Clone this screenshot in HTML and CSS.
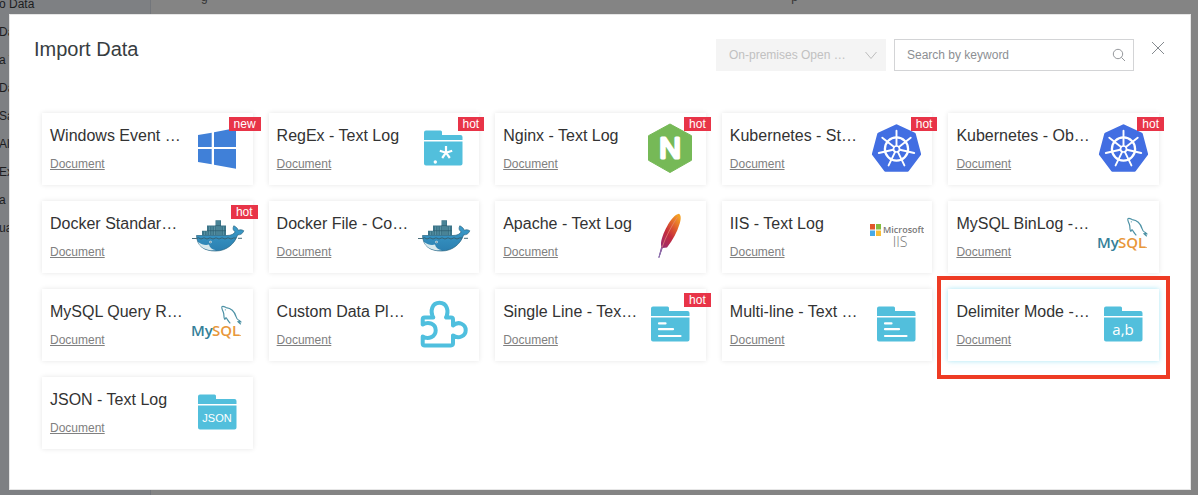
FILE: index.html
```html
<!DOCTYPE html>
<html lang="en">
<head>
<meta charset="utf-8">
<title>Import Data</title>
<link rel="stylesheet" href="styles.css">
</head>
<body>
<svg class="sprite" aria-hidden="true">
  <defs>
    <linearGradient id="feather-fill" x1="0.8" y1="0" x2="0.2" y2="1">
      <stop offset="0" stop-color="#f4a024"/><stop offset="0.25" stop-color="#e0602c"/>
      <stop offset="0.5" stop-color="#c42a3c"/><stop offset="0.75" stop-color="#a52c62"/><stop offset="1" stop-color="#6a3c98"/>
    </linearGradient>
    <linearGradient id="whale-fill" x1="0" y1="0" x2="0" y2="1">
      <stop offset="0" stop-color="#3c9ccb"/><stop offset="1" stop-color="#2b7fb0"/>
    </linearGradient>
  </defs>
  <symbol id="windows" viewBox="0 0 56 56">
    <path fill="#4080d8" d="M9 14 22.7 11.7V26H9zM25 11.2 47 7V26H25zM9 28H22.7V43.3L9 41zM25 28H47V47.7L25 43.8z"/>
  </symbol>
  <symbol id="folder" viewBox="0 0 56 56">
    <path fill="#52bfdc" d="M11 9.5H25.5Q27 9.5 27 11V14H45.5Q47.5 14 47.5 16V19H9V11.5Q9 9.5 11 9.5zM9 20.5H47.5V42.5Q47.5 44.5 45.5 44.5H11Q9 44.5 9 42.5z"/>
  </symbol>
  <symbol id="regex" viewBox="0 0 56 56">
    <use href="#folder"/>
    <path stroke="#fff" stroke-width="2.2" d="M31 25V31.7M31 31.7 24.8 29.7M31 31.7 37.2 29.7M31 31.7 27.2 37M31 31.7 34.8 37"/>
    <circle cx="20.3" cy="41" r="1.7" fill="#fff"/>
  </symbol>
  <symbol id="lines" viewBox="0 0 56 56">
    <use href="#folder"/>
    <path stroke="#fff" stroke-width="2.2" stroke-linecap="round" d="M17 26.4H23.5M17 32.2H31M17 39H38.5"/>
  </symbol>
  <symbol id="delimiter" viewBox="0 0 56 56">
    <use href="#folder"/><text class="folder-ab" x="28" y="38" text-anchor="middle">a,b</text>
  </symbol>
  <symbol id="json" viewBox="0 0 56 56">
    <use href="#folder"/><text class="folder-json" x="28" y="37" text-anchor="middle">JSON</text>
  </symbol>
  <symbol id="nginx" viewBox="0 0 56 56">
    <path fill="#76b957" stroke="#76b957" stroke-linejoin="round" d="M28 3 49.5 14.7V39.3L28 51.5 6.5 39.3V14.7z"/>
    <text class="nginx-mark" x="28" y="37" text-anchor="middle">N</text>
  </symbol>
  <symbol id="kubernetes" viewBox="0 0 56 56">
    <path fill="#426ee2" stroke="#426ee2" stroke-width="3" stroke-linejoin="round" d="M28.5 4.8 46.3 13.2 51.6 33.2 39.6 49.2H17.4L5.4 33.2 10.7 13.2z"/>
    <g fill="none" stroke="#fff">
      <circle cx="28.5" cy="28" r="11.6" stroke-width="2.3"/>
      <path stroke-width="1.9" stroke-linecap="round" d="M28.5 24.5V9.8M31.2 25.8 42.7 16.7M31.9 28.8 46.2 32M30 31.2 36.4 44.4M27 31.2 20.6 44.4M25.1 28.8 10.8 32M25.8 25.8 14.3 16.7"/>
      <circle cx="28.5" cy="28" r="3" stroke-width="1.7"/>
    </g>
  </symbol>
  <symbol id="docker" viewBox="0 0 56 56">
    <path fill="#3d7589" d="M26.5 11.3H32V16.5H37V26.5H13V21.7H18V16.5H26.5z"/>
    <path fill="none" stroke="#69a5b5" stroke-width="0.6" d="M15.5 22.5V26M18 22V26M20.5 17.5V26M23 17.5V26M25.5 17.5V26M28 12V26M30 12V26M32 17.5V26M34.5 17.5V26"/>
    <path stroke="#2c5c70" stroke-width="0.7" d="M18 21.7H37M26.5 16.6H32"/>
    <path fill="url(#whale-fill)" stroke="#29647f" stroke-width="0.7" d="M7.5 26.5H38C42 26.5 45 25.2 46.2 22.8 43.8 21.4 43.6 19.3 44.8 16.8 47.3 18 48.7 19.4 49.2 21.3 51.2 20.4 53 20.7 54.8 21.8 53.6 24.8 51.3 26 48.6 25.9 45.8 34.5 38 42 26.5 42 15 42 8 37.2 7.5 26.5z"/>
    <path fill="#d8e8ec" d="M9 33C13 36 17 36.5 20 35.5 20.5 38.5 23 40.5 27 41.2 18 42 11.5 39 9 33z"/>
    <circle cx="21.5" cy="33" r="1.2" fill="#e7f3f7"/><circle cx="21.5" cy="33" r="0.6" fill="#26495a"/>
    <path fill="none" stroke="#355d6c" stroke-width="0.9" d="M3 29.5H7L9.5 28.8 12 30 15 28.8 18 30 21 28.8 24 30 27 28.8 30 30 33 28.8 36 30 39 28.8 42 30 44.5 29H47M49 29.3H53"/>
  </symbol>
  <symbol id="apache" viewBox="0 0 56 56">
    <path fill="url(#feather-fill)" d="M37 4.8C39.5 6.5 39 11 37.2 16 35 23 31 31 25 38.5L20.7 39 17.3 48.8 16.4 48.5 19.3 37.5C18 33 21 25 25 17.5 28.5 11 33 5.5 37 4.8z"/>
    <path fill="none" stroke="#e78b79" stroke-width="0.7" d="M35.5 8C29.5 17 24 27 20 38.5"/>
    <path fill="none" stroke="#8d74ac" stroke-width="1" d="M20 38.5 16.8 48.7"/>
  </symbol>
  <symbol id="iis" viewBox="0 0 56 56">
    <path fill="#e2562b" d="M2 15H7V20.5H2z"/><path fill="#85bd3f" d="M8 15H13V20.5H8z"/>
    <path fill="#45a9e8" d="M2 21.5H7V27H2z"/><path fill="#f8bd38" d="M8 21.5H13V27H8z"/>
    <text class="ms-name" x="15" y="24">Microsoft</text>
    <text class="ms-product" x="32" y="38" text-anchor="middle">IIS</text>
  </symbol>
  <symbol id="mysql" viewBox="0 0 56 56">
    <path fill="none" stroke="#4c91a5" stroke-width="1.2" stroke-linejoin="round" d="M37 20.5 35.8 22.3C34.2 20.5 35.5 18 34.4 15.4 33.5 13.2 32.2 10.5 33 9.6 34 8.7 36 10 37.2 10.6 42.5 11.2 45.6 15 47 19.5 47.4 21.5 48.5 22.6 50.2 23.5L52 25 48.8 24.6 51.8 27.2M37 20.5C38.8 23 39.7 24.8 41.3 26.4"/>
    <circle cx="36.3" cy="12.8" r="0.6" fill="#4c91a5"/>
    <text class="mysql-my" x="2" y="39">My</text>
    <text class="mysql-sql" x="23" y="39">SQL</text>
    <path stroke="#e8a552" stroke-width="0.8" d="M50 38.5H52"/>
  </symbol>
  <symbol id="puzzle" viewBox="0 0 56 56">
    <path fill="none" stroke="#4fbfde" stroke-width="4" stroke-linejoin="round" d="M9.5 20.5H18.3C14.8 14 17 5.8 24.5 5.8S34.2 14 31 20.5H36Q38 20.5 38 22.5V28.5C43.5 23.5 50.7 27.3 50.7 33.2S43.5 42.4 38 38.5V46.3Q38 48.4 36 48.4H9.7Q7.7 48.4 7.7 46.4V39.5C13.5 43 20.7 39.7 20.7 33.2S13.5 24 7.7 27.5V22.5Q7.7 20.5 9.5 20.5z"/>
  </symbol>
</svg>

<div class="page" aria-hidden="true">
  <ul class="side-nav">
    <li>o Data</li><li>Da</li><li>a T</li><li>Da</li><li>Sa</li><li>Ale</li><li>Ex</li><li>a C</li><li>ual</li>
  </ul>
  <div class="page-body"><span>g</span><span>p</span></div>
</div>

<main class="dialog" role="dialog" aria-labelledby="dialog-title">
  <header class="dialog-header">
    <h1 class="dialog-title" id="dialog-title">Import Data</h1>
    <div class="filters">
      <div class="field type-field">
        <select class="type-select" aria-label="Source type" disabled><option>On-premises Open …</option></select>
        <svg class="field-icon" viewBox="0 0 14 14"><path d="M1.5 4 7 10.5 12.5 4"/></svg>
      </div>
      <div class="field search-field">
        <input class="search-input" type="text" aria-label="Search" placeholder="Search by keyword">
        <svg class="field-icon" viewBox="0 0 14 14"><circle cx="6" cy="6" r="4.7"/><path d="M9.4 9.4 13 13"/></svg>
      </div>
    </div>
    <button class="close" type="button" aria-label="Close"><svg viewBox="0 0 14 14"><path d="M1 1 13 13M13 1 1 13"/></svg></button>
  </header>

  <ul class="cards">
    <li class="card"><div class="card-text"><h2>Windows Event …</h2><a href="#">Document</a></div><svg class="card-icon"><use href="#windows"/></svg><span class="badge badge-new">new</span></li>
    <li class="card"><div class="card-text"><h2>RegEx - Text Log</h2><a href="#">Document</a></div><svg class="card-icon"><use href="#regex"/></svg><span class="badge">hot</span></li>
    <li class="card"><div class="card-text"><h2>Nginx - Text Log</h2><a href="#">Document</a></div><svg class="card-icon"><use href="#nginx"/></svg><span class="badge">hot</span></li>
    <li class="card"><div class="card-text"><h2>Kubernetes - St…</h2><a href="#">Document</a></div><svg class="card-icon"><use href="#kubernetes"/></svg><span class="badge">hot</span></li>
    <li class="card"><div class="card-text"><h2>Kubernetes - Ob…</h2><a href="#">Document</a></div><svg class="card-icon"><use href="#kubernetes"/></svg><span class="badge">hot</span></li>
    <li class="card"><div class="card-text"><h2>Docker Standar…</h2><a href="#">Document</a></div><svg class="card-icon"><use href="#docker"/></svg><span class="badge">hot</span></li>
    <li class="card"><div class="card-text"><h2>Docker File - Co…</h2><a href="#">Document</a></div><svg class="card-icon"><use href="#docker"/></svg></li>
    <li class="card"><div class="card-text"><h2>Apache - Text Log</h2><a href="#">Document</a></div><svg class="card-icon"><use href="#apache"/></svg></li>
    <li class="card"><div class="card-text"><h2>IIS - Text Log</h2><a href="#">Document</a></div><svg class="card-icon"><use href="#iis"/></svg></li>
    <li class="card"><div class="card-text"><h2>MySQL BinLog -…</h2><a href="#">Document</a></div><svg class="card-icon"><use href="#mysql"/></svg></li>
    <li class="card"><div class="card-text"><h2>MySQL Query R…</h2><a href="#">Document</a></div><svg class="card-icon"><use href="#mysql"/></svg></li>
    <li class="card"><div class="card-text"><h2>Custom Data Pl…</h2><a href="#">Document</a></div><svg class="card-icon"><use href="#puzzle"/></svg></li>
    <li class="card"><div class="card-text"><h2>Single Line - Tex…</h2><a href="#">Document</a></div><svg class="card-icon"><use href="#lines"/></svg><span class="badge">hot</span></li>
    <li class="card"><div class="card-text"><h2>Multi-line - Text …</h2><a href="#">Document</a></div><svg class="card-icon"><use href="#lines"/></svg></li>
    <li class="card card-marked"><div class="card-text"><h2>Delimiter Mode -…</h2><a href="#">Document</a></div><svg class="card-icon"><use href="#delimiter"/></svg></li>
    <li class="card"><div class="card-text"><h2>JSON - Text Log</h2><a href="#">Document</a></div><svg class="card-icon"><use href="#json"/></svg></li>
  </ul>
</main>
</body>
</html>
```

FILE: styles.css
```css
* { box-sizing: border-box; }

body {
  margin: 0;
  min-height: 100vh;
  display: flex;
  flex-direction: column;
  background: #848484;
  font-family: "Liberation Sans", Arial, sans-serif;
  font-size: 12px;
  color: #333;
}

ul { list-style: none; margin: 0; padding: 0; }
.sprite { position: absolute; width: 0; height: 0; }

/* dimmed page under the dialog */
.page {
  position: absolute;
  inset: 0;
  display: grid;
  grid-template-columns: 151px 1fr;
  overflow: hidden;
  color: #1c1d1f;
}
.side-nav {
  margin-top: -10px;
  background: #7e8083;
  border-right: 1px solid #73767b;
  line-height: 28px;
  white-space: nowrap;
}
.side-nav li { margin-left: -1px; }
.page-body {
  display: flex;
  justify-content: space-between;
  margin-top: -10px;
  padding: 0 400px 0 50px;
  line-height: 14px;
  color: #333;
}

.dialog {
  position: relative;
  margin: 14px 7px 5px 9px;
  flex: 1;
  padding: 24px 25px 40px 24px;
  background: #fff;
  border: 1px solid #e6e6e6;
}
.dialog-header { display: flex; align-items: flex-start; }
.dialog-title {
  margin: 0;
  flex: 1;
  font-size: 20px;
  line-height: 20px;
  font-weight: 400;
  color: #373d41;
}
.filters { display: flex; gap: 8px; margin-right: 17px; }
.field { position: relative; height: 32px; }
.type-field { width: 170px; }
.search-field { width: 240px; }
.type-select, .search-input {
  appearance: none;
  width: 100%;
  height: 100%;
  padding: 0 32px 0 12px;
  border: 1px solid #d3d4d6;
  border-radius: 0;
  background: #fff;
  font: inherit;
  color: #555;
}
.type-select { background: #f4f4f4; border-color: #f4f4f4; color: #c1c1c1; opacity: 1; }
.search-input::placeholder { color: #8c8f93; opacity: 1; }
.field-icon {
  position: absolute;
  top: 9px;
  right: 8px;
  width: 14px;
  height: 14px;
  fill: none;
  stroke: #95989c;
  pointer-events: none;
}
.type-field .field-icon { stroke: #bdbdbd; }
.close { padding: 0; border: 0; background: none; width: 14px; height: 18px; }
.close svg { display: block; width: 14px; height: 14px; fill: none; stroke: #858a8f; }

.cards {
  display: grid;
  grid-template-columns: repeat(5, minmax(0, 1fr));
  gap: 16px;
  padding: 42px 6px 0 8px;
}
.card {
  position: relative;
  display: flex;
  justify-content: space-between;
  padding: 8px;
  background: #fff;
  box-shadow: 0 0 5px rgba(0, 0, 0, 0.1);
}
.card-text { min-width: 0; padding-top: 5px; white-space: nowrap; }
.card h2 {
  margin: 0 0 10px;
  font-size: 16px;
  line-height: 20px;
  font-weight: 400;
}
.card a { display: block; width: max-content; line-height: 16px; color: #808080; text-underline-offset: 1px; }
.card-icon { flex: none; width: 56px; height: 56px; }
.badge {
  position: absolute;
  top: 4px;
  right: -5px;
  padding: 0 5px;
  background: #e83448;
  color: #fff;
  line-height: 14px;
}
.badge-new { right: -8px; }

.card-marked { box-shadow: 0 0 5px rgba(79, 205, 235, 0.5); }
.card-marked::after {
  content: "";
  position: absolute;
  inset: -13px -11px -18px -11px;
  border: 4px solid #ee3b24;
  pointer-events: none;
}

/* lettering inside the product icons */
.folder-ab { font: 15px "Open Sans", sans-serif; fill: #fff; }
.folder-json { font: 11px "Liberation Sans", sans-serif; fill: #fff; }
.nginx-mark { font: 30px "Liberation Sans", sans-serif; fill: #fff; stroke: #fff; stroke-width: 3px; stroke-linejoin: round; }
.ms-name { font: 600 9px "Open Sans", sans-serif; fill: #777; }
.ms-product { font: 300 14px "Open Sans", sans-serif; fill: #777; }
.mysql-my { font: 600 15px "Open Sans", sans-serif; fill: #357f99; }
.mysql-sql { font: 600 15px "Open Sans", sans-serif; fill: #e8973a; }
```
